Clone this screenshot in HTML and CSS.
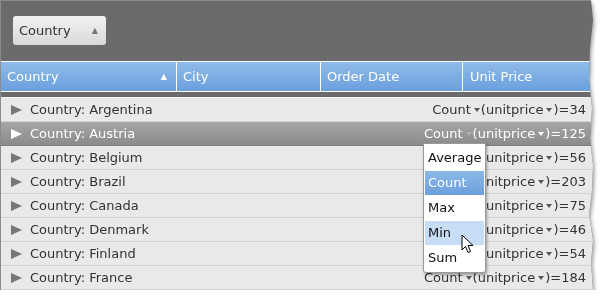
FILE: index.html
```html
<!DOCTYPE html>
<html lang="en">
<head>
    <meta charset="UTF-8">
    <title>Grid grouping</title>
    <link rel="stylesheet" href="styles.css">
</head>
<body>
    <div class="shadow">
        <div class="frame">
            <div class="group-panel">
                <div class="group-chip">Country <span class="chip-arrow">&#9650;</span></div>
            </div>

            <div class="header">
                <div class="col col-country">Country <span class="sort">&#9650;</span></div>
                <div class="col col-city">City</div>
                <div class="col col-date">Order Date</div>
                <div class="col col-price">Unit Price</div>
            </div>

            <div class="rows">
                <div class="row"><span class="expander"></span><span class="label">Country: Argentina</span><span class="agg">Count<i class="caret"></i>(unitprice<i class="caret"></i>)=34</span></div>
                <div class="row selected"><span class="expander"></span><span class="label">Country: Austria</span><span class="agg">Count<i class="caret"></i>(unitprice<i class="caret"></i>)=125</span></div>
                <div class="row"><span class="expander"></span><span class="label">Country: Belgium</span><span class="agg">Count<i class="caret"></i>(unitprice<i class="caret"></i>)=56</span></div>
                <div class="row"><span class="expander"></span><span class="label">Country: Brazil</span><span class="agg">Count<i class="caret"></i>(unitprice<i class="caret"></i>)=203</span></div>
                <div class="row"><span class="expander"></span><span class="label">Country: Canada</span><span class="agg">Count<i class="caret"></i>(unitprice<i class="caret"></i>)=75</span></div>
                <div class="row"><span class="expander"></span><span class="label">Country: Denmark</span><span class="agg">Count<i class="caret"></i>(unitprice<i class="caret"></i>)=46</span></div>
                <div class="row"><span class="expander"></span><span class="label">Country: Finland</span><span class="agg">Count<i class="caret"></i>(unitprice<i class="caret"></i>)=54</span></div>
                <div class="row"><span class="expander"></span><span class="label">Country: France</span><span class="agg">Count<i class="caret"></i>(unitprice<i class="caret"></i>)=184</span></div>
            </div>

            <!-- aggregate function menu -->
            <ul class="menu">
                <li>Average</li>
                <li class="active">Count</li>
                <li>Max</li>
                <li class="hover">Min</li>
                <li>Sum</li>
            </ul>

            <svg class="cursor" width="13" height="20" viewBox="0 0 13 20">
                <path d="M1 1 L1 16 L4.5 12.5 L7 18.5 L9.5 17.5 L7 11.5 L12 11.5 Z" fill="#fff" stroke="#000" stroke-width="1" stroke-linejoin="round"/>
            </svg>
        </div>
    </div>
</body>
</html>
```

FILE: styles.css
```css
body {
    margin: 0;
    font-family: "DejaVu Sans", Verdana, sans-serif;
    font-size: 13px;
    background: #fff;
}

.shadow {
    width: 596px;
    filter: drop-shadow(1px 3px 2px rgba(0, 0, 0, 0.45));
}

.frame {
    position: relative;
    width: 595px;
    height: 290px;
    background: #6b6b6b;
    border-left: 1px solid #8c8c8c;
    box-sizing: border-box;
    clip-path: polygon(0 0, 591px 0, 593px 20px, 590px 48px, 589px 80px, 592px 108px, 590px 138px, 593px 165px, 592px 190px, 589px 215px, 593px 240px, 591px 262px, 593px 290px, 0 290px);
}

/* group panel */
.group-panel {
    height: 61px;
    padding: 16px 0 0 12px;
    box-sizing: border-box;
    border-top: 1px solid #8a8a8a;
}

.group-chip {
    display: inline-flex;
    align-items: center;
    justify-content: space-between;
    width: 93px;
    height: 29px;
    padding: 0 8px 0 6px;
    box-sizing: border-box;
    background: linear-gradient(#f2f2f2, #d9d9d9);
    border-radius: 3px;
    color: #333;
    margin-top: -1px;
}

.chip-arrow {
    font-size: 8px;
    color: #777;
}

/* column header */
.header {
    display: flex;
    height: 29px;
    border-top: 1px solid #fff;
    border-bottom: 1px solid #fff;
    background: linear-gradient(#8fbbe9, #6a9fdd);
    color: #fff;
}

.col {
    display: flex;
    align-items: center;
    padding-left: 6px;
    box-sizing: border-box;
    border-right: 1px solid #fff;
}

.col-country { width: 176px; justify-content: space-between; padding-right: 9px; }
.col-city { width: 144px; }
.col-date { width: 142px; }
.col-price { flex: 1; padding-left: 7px; border-right: none; }

.sort {
    font-size: 8px;
}

/* group rows */
.rows {
    margin-top: 5px;
    border-top: 1px solid #f2f2f2;
}

.row {
    display: flex;
    align-items: center;
    height: 24px;
    box-sizing: border-box;
    padding: 0 9px 0 10px;
    background: #e9e9e9;
    border-bottom: 1px solid #d3d3d3;
    color: #333;
}

.row.selected {
    background: linear-gradient(#a6a6a6, #8b8b8b);
    color: #fff;
    border-bottom-color: #7d7d7d;
}

.expander {
    width: 0;
    height: 0;
    border-top: 5px solid transparent;
    border-bottom: 5px solid transparent;
    border-left: 11px solid #777;
    margin-right: 8px;
}

.row.selected .expander {
    border-left-color: #fff;
}

.label {
    flex: 1;
}

.agg {
    white-space: nowrap;
}

.caret {
    display: inline-block;
    width: 0;
    height: 0;
    border-left: 3px solid transparent;
    border-right: 3px solid transparent;
    border-top: 4px solid #555;
    margin: 0 1px 1px 3px;
    vertical-align: middle;
}

.row.selected .caret {
    border-top-color: #fff;
}

.row.selected .caret:first-child {
    border-top-color: #b0b0b0;
}

/* dropdown */
.menu {
    position: absolute;
    left: 422px;
    top: 143px;
    width: 63px;
    margin: 0;
    padding: 2px 1px 1px;
    box-sizing: border-box;
    list-style: none;
    background: #fff;
    border: 1px solid #9a9a9a;
    border-radius: 0 0 3px 3px;
    box-shadow: 1px 2px 3px rgba(0, 0, 0, 0.35);
    color: #111;
}

.menu li {
    height: 24px;
    line-height: 24px;
    padding-left: 3px;
    margin-bottom: 1px;
}

.menu li.active {
    background: linear-gradient(#8cb8e8, #6b9fdc);
    color: #fff;
}

.menu li.hover {
    background: #c7ddf5;
}

.cursor {
    position: absolute;
    left: 460px;
    top: 234px;
}
```
